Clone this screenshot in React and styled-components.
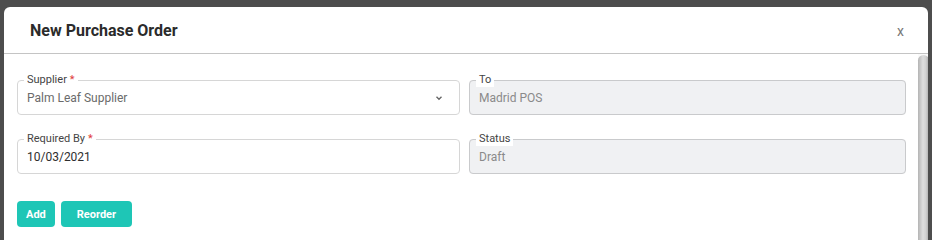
import React from "react";
import styled, { createGlobalStyle } from "styled-components";

const GlobalStyle = createGlobalStyle`
  html, body {
    margin: 0;
    padding: 0;
    background: #4d4d4d;
    font-family: Roboto, "Liberation Sans", sans-serif;
    overflow: hidden;
  }
`;

const Backdrop = styled.div`
  height: 240px;
  padding: 7px 4px 0 4px;
  box-sizing: border-box;
`;

const Modal = styled.div`
  background: #ffffff;
  border-radius: 6px 6px 0 0;
  height: 300px;
  display: flex;
  flex-direction: column;
  overflow: hidden;
`;

const Header = styled.div`
  height: 45px;
  flex: none;
  display: flex;
  align-items: center;
  justify-content: space-between;
  padding: 1px 24px 0 26px;
  border-bottom: 1px solid #c4c4c4;
`;

const Title = styled.h2`
  margin: 0;
  font-size: 16px;
  font-weight: 700;
  color: #2b2b2b;
`;

const Close = styled.button`
  border: none;
  background: none;
  padding: 0;
  font-family: inherit;
  font-size: 14px;
  color: #777;
  cursor: pointer;
`;

const Body = styled.div`
  flex: 1;
  display: flex;
  min-height: 0;
`;

const Content = styled.div`
  flex: 1;
  padding: 19px 12px 0 13px;
`;

const ScrollTrack = styled.div`
  width: 11px;
  flex: none;
  background: #fafafa;
  padding-top: 1px;
`;

const ScrollThumb = styled.div`
  height: 100%;
  border-radius: 6px 6px 0 0;
  background: linear-gradient(to right, #b4b4b4, #dedede 45%, #d2d2d2 70%, #a9a9a9);
`;

const Grid = styled.div`
  display: grid;
  grid-template-columns: 443px 437px;
  column-gap: 9px;
  row-gap: 17px;
`;

const Field = styled.fieldset`
  margin: 0;
  padding: 0 9px 5px 6px;
  border: 1px solid ${(p) => (p.$disabled ? "#c9cacc" : "#d6d6d6")};
  border-radius: 4px;
  background: ${(p) => (p.$disabled ? "#f0f1f3" : "#fff")};
  display: flex;
  align-items: center;
  min-width: 0;
`;

const Legend = styled.legend`
  padding: 0 3px;
  font-size: 11px;
  line-height: 14px;
  color: #444;
  background: #fff;
`;

const Req = styled.span`
  color: #e03a3a;
  margin-left: 3px;
`;

const Value = styled.div`
  flex: 1;
  height: 22px;
  line-height: 22px;
  padding: 0 3px;
  font-size: 12px;
  color: ${(p) => (p.$muted ? "#8a8a8a" : p.$dark ? "#2e2e2e" : "#6b6b6b")};
  white-space: nowrap;
`;

const Chevron = styled.svg`
  width: 8px;
  height: 8px;
  margin-right: 7px;
`;

const Actions = styled.div`
  display: flex;
  gap: 6px;
  margin-top: 27px;
`;

const Button = styled.button`
  height: 26px;
  padding: 0 ${(p) => p.$pad}px;
  border: none;
  border-radius: 4px;
  background: #1ec6b6;
  color: #fff;
  font-family: inherit;
  font-weight: 700;
  font-size: 11px;
  cursor: pointer;
`;

export default function App() {
  return (
    <>
      <GlobalStyle />
      <Backdrop>
        <Modal>
          <Header>
            <Title>New Purchase Order</Title>
            <Close>x</Close>
          </Header>
          <Body>
            <Content>
              <Grid>
                <Field>
                  <Legend>
                    Supplier<Req>*</Req>
                  </Legend>
                  <Value>Palm Leaf Supplier</Value>
                  <Chevron viewBox="0 0 8 8">
                    <path d="M1.5 2.8 L4 5.2 L6.5 2.8" fill="none" stroke="#666" strokeWidth="1.4" />
                  </Chevron>
                </Field>
                <Field $disabled>
                  <Legend>To</Legend>
                  <Value $muted>Madrid POS</Value>
                </Field>
                <Field>
                  <Legend>
                    Required By<Req>*</Req>
                  </Legend>
                  <Value $dark>10/03/2021</Value>
                </Field>
                <Field $disabled>
                  <Legend>Status</Legend>
                  <Value $muted>Draft</Value>
                </Field>
              </Grid>
              <Actions>
                <Button $pad={9}>Add</Button>
                <Button $pad={16}>Reorder</Button>
              </Actions>
            </Content>
            <ScrollTrack>
              <ScrollThumb />
            </ScrollTrack>
          </Body>
        </Modal>
      </Backdrop>
    </>
  );
}
